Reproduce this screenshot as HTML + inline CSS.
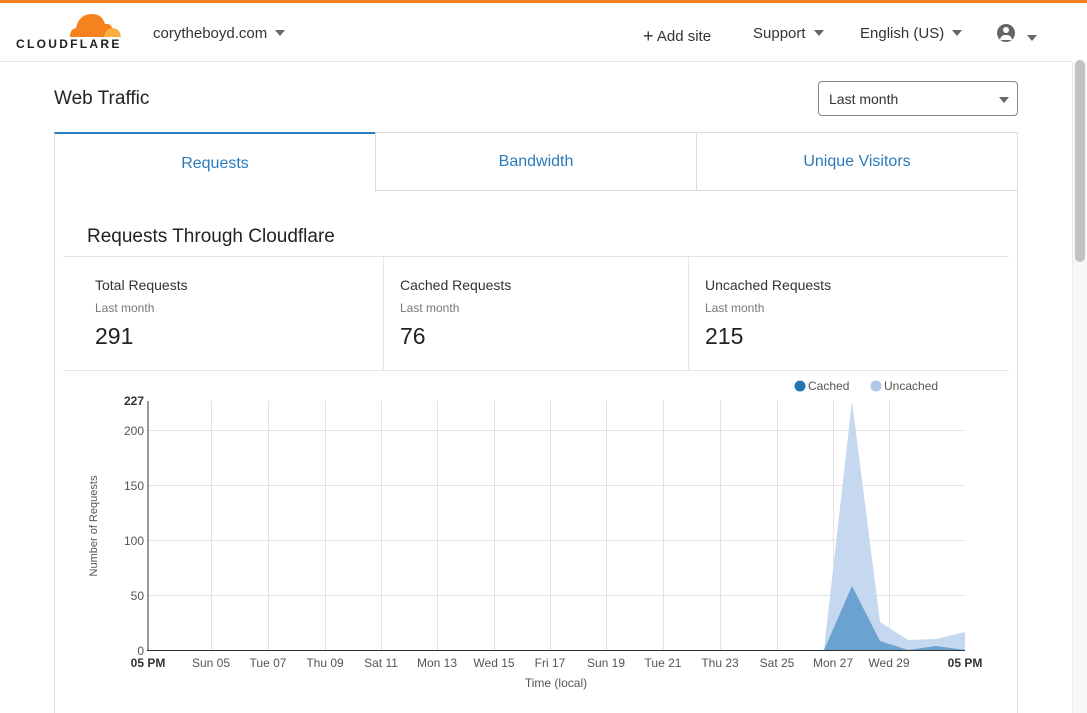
<!DOCTYPE html>
<html style="overflow:hidden;height:713px"><head><meta charset="utf-8"><style>
*{box-sizing:border-box;margin:0;padding:0}
body{width:1087px;height:713px;overflow:hidden;background:#fff;font-family:"Liberation Sans",sans-serif;color:#313131;position:relative}
.abs{position:absolute}
.top{left:0;top:0;width:1087px;height:3px;background:#f6821f}
.hdr{left:0;top:3px;width:1072px;height:59px;border-bottom:1px solid #e5e5e5}
.nav{font-size:15px;color:#333;top:25px}
.tri{display:inline-block;width:0;height:0;border-left:5px solid transparent;border-right:5px solid transparent;border-top:6px solid #666;vertical-align:middle;margin-left:8px;position:relative;top:-1px}
.sb{left:1072px;top:62px;width:15px;height:651px;background:#f7f7f7;border-left:1px solid #eaeaea}
.thumb{left:1075px;top:60px;width:10px;height:202px;background:#c2c2c2;border-radius:5px}
.tab{top:132px;height:59px;border:1px solid #dcdcdc;color:#2a7bbd;font-size:16px;text-align:center;line-height:57px;background:#fff}
.lbl{font-size:14px;color:#333}
.sub{font-size:12px;color:#777}
.num{font-size:23px;color:#222}
</style></head><body>
<div class="abs top"></div>
<div class="abs hdr"></div>
<svg class="abs" style="left:16px;top:13px" width="106" height="38" viewBox="0 0 106 38">
<path d="M54 24 Q54 16 60 15 Q63 1 76 1 Q86 1 89 11 Q96 10 97 18 L98 24 Z" fill="#f6821f"/>
<path d="M88 24 Q89 16 96 15 Q104 15 105 24 Z" fill="#fbad41"/>
<text x="0" y="35" font-family="Liberation Sans" font-weight="bold" font-size="12" letter-spacing="2.3" fill="#222">CLOUDFLARE</text>
</svg>
<div class="abs nav" style="left:153px">corytheboyd.com<span class="tri"></span></div>
<div class="abs nav" style="left:643px"><span style="font-size:18px;position:relative;top:1px">+</span> Add site</div>
<div class="abs nav" style="left:753px">Support<span class="tri"></span></div>
<div class="abs nav" style="left:860px">English (US)<span class="tri"></span></div>
<div class="abs" style="left:997px;top:24px;width:18px;height:18px;border-radius:50%;background:#666"></div>
<div class="abs" style="left:1003px;top:27px;width:6px;height:6px;border-radius:50%;background:#fff"></div>
<div class="abs" style="left:1000px;top:35px;width:12px;height:5px;border-radius:6px 6px 0 0;background:#fff"></div>
<div class="abs" style="left:1027px;top:30px"><span class="tri" style="margin:0"></span></div>
<div class="abs sb"></div><div class="abs thumb"></div>
<div class="abs" style="left:54px;top:88px;font-size:19px;color:#222">Web Traffic</div>
<div class="abs" style="left:818px;top:81px;width:200px;height:35px;border:1px solid #888;border-radius:4px;font-size:14px;padding:9px 10px;color:#333">Last month<span class="tri" style="position:absolute;right:8px;top:15px;margin:0"></span></div>
<div class="abs" style="left:54px;top:132px;width:964px;height:581px;border:1px solid #dcdcdc;border-bottom:none"></div>
<div class="abs tab" style="left:54px;width:322px;border-top:2px solid #2a7bbd;border-bottom:none;line-height:60px;height:60px">Requests</div>
<div class="abs tab" style="left:375px;width:322px">Bandwidth</div>
<div class="abs tab" style="left:696px;width:322px">Unique Visitors</div>
<div class="abs" style="left:87px;top:226px;font-size:19px;color:#222">Requests Through Cloudflare</div>
<div class="abs" style="left:63px;top:256px;width:946px;height:115px;border-top:1px solid #e5e5e5;border-bottom:1px solid #e5e5e5"></div>
<div class="abs" style="left:383px;top:257px;width:1px;height:113px;background:#e5e5e5"></div>
<div class="abs" style="left:688px;top:257px;width:1px;height:113px;background:#e5e5e5"></div>
<div class="abs lbl" style="left:95px;top:277px">Total Requests</div><div class="abs sub" style="left:95px;top:301px">Last month</div><div class="abs num" style="left:95px;top:323px">291</div>
<div class="abs lbl" style="left:400px;top:277px">Cached Requests</div><div class="abs sub" style="left:400px;top:301px">Last month</div><div class="abs num" style="left:400px;top:323px">76</div>
<div class="abs lbl" style="left:705px;top:277px">Uncached Requests</div><div class="abs sub" style="left:705px;top:301px">Last month</div><div class="abs num" style="left:705px;top:323px">215</div>
<svg class="abs" style="left:0;top:370px" width="1072" height="343" viewBox="0 370 1072 343" font-family="Liberation Sans" font-size="12" fill="#555">
<circle cx="800" cy="386" r="5.5" fill="#1f78b4"/><text x="808" y="390">Cached</text>
<circle cx="876" cy="386" r="5.5" fill="#aec7e8"/><text x="884" y="390">Uncached</text>
<g stroke="#e3e3e3" stroke-width="1">
<line x1="148" y1="430.5" x2="965" y2="430.5"/><line x1="148" y1="485.5" x2="965" y2="485.5"/><line x1="148" y1="540.5" x2="965" y2="540.5"/><line x1="148" y1="595.5" x2="965" y2="595.5"/>
<line x1="211.5" y1="401" x2="211.5" y2="650"/><line x1="268.5" y1="401" x2="268.5" y2="650"/><line x1="325.5" y1="401" x2="325.5" y2="650"/><line x1="381.5" y1="401" x2="381.5" y2="650"/><line x1="437.5" y1="401" x2="437.5" y2="650"/><line x1="494.5" y1="401" x2="494.5" y2="650"/><line x1="550.5" y1="401" x2="550.5" y2="650"/><line x1="606.5" y1="401" x2="606.5" y2="650"/><line x1="663.5" y1="401" x2="663.5" y2="650"/><line x1="720.5" y1="401" x2="720.5" y2="650"/><line x1="777.5" y1="401" x2="777.5" y2="650"/><line x1="833.5" y1="401" x2="833.5" y2="650"/><line x1="889.5" y1="401" x2="889.5" y2="650"/>
</g>
<path d="M824 650 L852 401 L880 622 L908 640 L936 639 L965 632 L965 650 Z" fill="#c6d8ef"/>
<path d="M824 650 L852 586 L880 641 L908 650 L936 646 L965 650 Z" fill="#6aa3cf"/>
<line x1="148" y1="401" x2="148" y2="651" stroke="#333"/><line x1="147" y1="650.5" x2="965" y2="650.5" stroke="#333"/>
<g text-anchor="end"><text x="144" y="405" font-weight="bold" fill="#333">227</text><text x="144" y="435">200</text><text x="144" y="490">150</text><text x="144" y="545">100</text><text x="144" y="600">50</text><text x="144" y="655">0</text></g>
<g text-anchor="middle"><text x="148" y="667" font-weight="bold" fill="#333">05 PM</text><text x="211" y="667">Sun 05</text><text x="268" y="667">Tue 07</text><text x="325" y="667">Thu 09</text><text x="381" y="667">Sat 11</text><text x="437" y="667">Mon 13</text><text x="494" y="667">Wed 15</text><text x="550" y="667">Fri 17</text><text x="606" y="667">Sun 19</text><text x="663" y="667">Tue 21</text><text x="720" y="667">Thu 23</text><text x="777" y="667">Sat 25</text><text x="833" y="667">Mon 27</text><text x="889" y="667">Wed 29</text><text x="965" y="667" font-weight="bold" fill="#333">05 PM</text>
<text x="556" y="687">Time (local)</text>
<text transform="translate(97 526) rotate(-90)" font-size="11">Number of Requests</text></g>
</svg>
</body></html>
